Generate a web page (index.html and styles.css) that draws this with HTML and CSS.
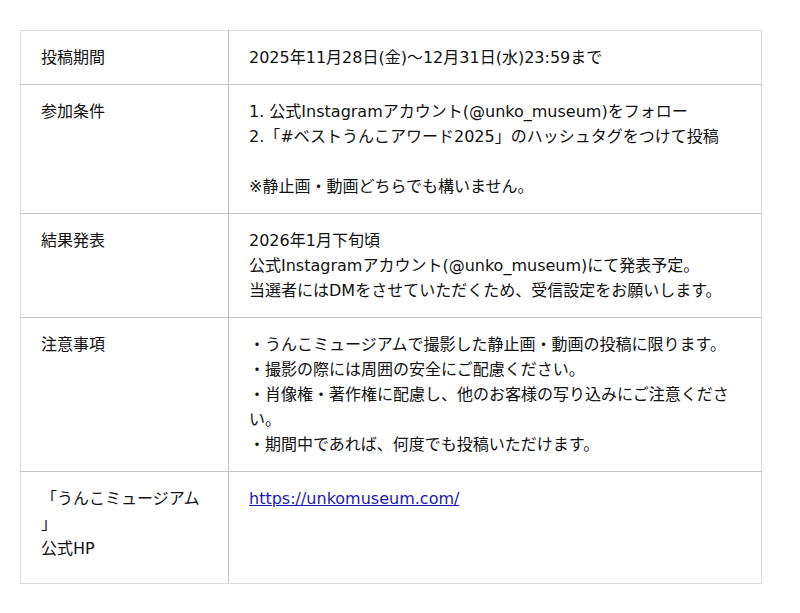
FILE: index.html
```html
<!DOCTYPE html>
<html lang="ja">
<head>
<meta charset="utf-8">
<link rel="stylesheet" href="styles.css">
</head>
<body>
<table class="info">
  <tr>
    <th>投稿期間</th>
    <td>2025年11月28日(金)〜12月31日(水)23:59まで</td>
  </tr>
  <tr>
    <th>参加条件</th>
    <td>1. 公式Instagramアカウント(@unko_museum)をフォロー<br>2.「#ベストうんこアワード2025」のハッシュタグをつけて投稿<br><br>※静止画・動画どちらでも構いません。</td>
  </tr>
  <tr>
    <th>結果発表</th>
    <td>2026年1月下旬頃<br>公式Instagramアカウント(@unko_museum)にて発表予定。<br>当選者にはDMをさせていただくため、受信設定をお願いします。</td>
  </tr>
  <tr>
    <th>注意事項</th>
    <td>・うんこミュージアムで撮影した静止画・動画の投稿に限ります。<br>・撮影の際には周囲の安全にご配慮ください。<br>・肖像権・著作権に配慮し、他のお客様の写り込みにご注意ください。<br>・期間中であれば、何度でも投稿いただけます。</td>
  </tr>
  <tr class="last">
    <th>「うんこミュージアム<br>」<br>公式HP</th>
    <td><a href="#">https://unkomuseum.com/</a></td>
  </tr>
</table>
</body>
</html>
```

FILE: styles.css
```css
html, body {
  margin: 0;
  padding: 0;
  background: #fff;
}
body {
  padding: 30px 20px;
  font-family: "DejaVu Sans", "Noto Sans CJK JP", sans-serif;
  font-size: 16px;
  line-height: 25px;
  color: #111;
}
.info {
  width: 742px;
  border-collapse: collapse;
  table-layout: fixed;
}
.info th,
.info td {
  text-align: left;
  vertical-align: top;
  font-weight: normal;
  padding: 14px 20px;
  border: 1px solid #c4c4c4;
}
.info th {
  width: 167px;
}
.info tr:first-child th,
.info tr:first-child td {
  border-top-color: #dcdcdc;
}
.info th {
  border-left-color: #dcdcdc;
}
.info td {
  border-right-color: #dcdcdc;
}
.info tr.last th,
.info tr.last td {
  border-bottom-color: #dcdcdc;
  padding-bottom: 22px;
}
.info a {
  color: #1a1ab0;
  text-decoration: underline;
}
```
